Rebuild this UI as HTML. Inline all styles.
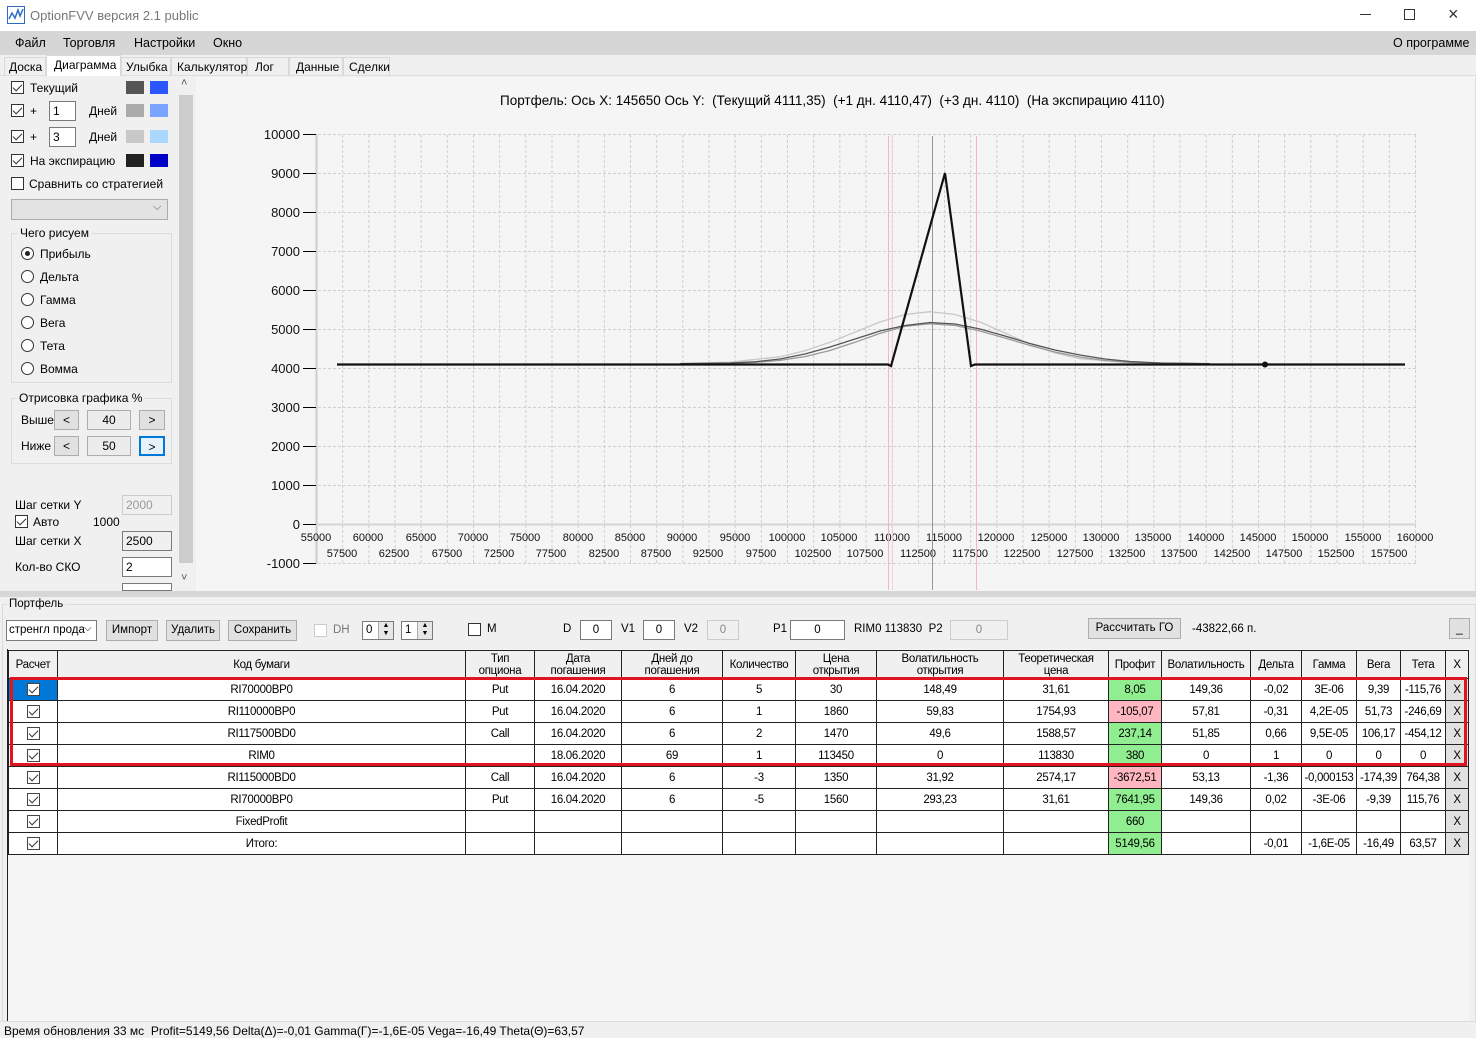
<!DOCTYPE html>
<html><head><meta charset="utf-8">
<style>
*{box-sizing:border-box;margin:0;padding:0}
body{width:1476px;height:1038px;overflow:hidden;background:#f0f0f0;font-family:"Liberation Sans",sans-serif;font-size:12px;color:#000;position:relative}
.a{position:absolute;white-space:nowrap}
.cb{position:absolute;width:13px;height:13px;border:1px solid #333;background:#fff}
.cb.c::after{content:"";position:absolute;left:3px;top:0px;width:4px;height:8px;border:solid #333;border-width:0 1.5px 1.5px 0;transform:rotate(45deg)}
.rb{position:absolute;width:13px;height:13px;border:1px solid #333;border-radius:50%;background:#fff}
.tb{position:absolute;background:#fff;border:1px solid #7a7a7a;padding:1px 3px;height:20px;line-height:16px}
.btn{position:absolute;background:#e1e1e1;border:1px solid #adadad;text-align:center;height:21px;line-height:19px}
.sw{position:absolute;width:18px;height:13px}
table{border-collapse:collapse;table-layout:fixed;position:absolute;left:8px;top:650px;width:1460px;font-size:11.5px;letter-spacing:-0.3px}
td{border:1px solid #222;height:22px;text-align:center;padding:0;background:#fff;overflow:hidden;white-space:nowrap}
tr.h td{height:28px;background:#f0f0f0;line-height:12px;font-size:11.5px;vertical-align:bottom;padding-bottom:1px}
tr.h td.s{vertical-align:middle;padding-bottom:0}
td.g{background:#90ee90}td.p{background:#ffb6c1}
.ck{display:inline-block;width:13px;height:13px;border:1px solid #444;position:relative;vertical-align:middle;background:#fff}
.ck::after{content:"";position:absolute;left:3px;top:0;width:4px;height:8px;border:solid #333;border-width:0 1.5px 1.5px 0;transform:rotate(45deg)}
</style></head><body>
<div class="a" style="left:0;top:0;width:1476px;height:31px;background:#fff"></div>
<svg class="a" style="left:7px;top:6px" width="18" height="18" viewBox="0 0 18 18"><rect x="0.5" y="0.5" width="17" height="17" fill="none" stroke="#2b6cc4"/><path d="M2 13 L5 7 L8 12 L11 4 L13 10 L16 3" fill="none" stroke="#2b6cc4" stroke-width="1.5"/></svg>
<div class="a" style="left:30px;top:8px;font-size:13px;color:#777">OptionFVV версия 2.1 public</div>
<div class="a" style="left:1360px;top:14px;width:11px;height:1px;background:#333"></div>
<div class="a" style="left:1404px;top:9px;width:11px;height:11px;border:1px solid #333"></div>
<div class="a" style="left:1448px;top:4px;font-size:18px;color:#333">×</div>
<div class="a" style="left:0;top:31px;width:1476px;height:24px;background:#d6d6d6"></div>
<div class="a" style="left:15px;top:36px;font-size:12.5px">Файл</div>
<div class="a" style="left:63px;top:36px;font-size:12.5px">Торговля</div>
<div class="a" style="left:134px;top:36px;font-size:12.5px">Настройки</div>
<div class="a" style="left:213px;top:36px;font-size:12.5px">Окно</div>
<div class="a" style="left:1393px;top:36px;font-size:12.5px">О программе</div>
<div class="a" style="left:0;top:55px;width:1476px;height:21px;background:#f0f0f0;border-bottom:1px solid #ddd"></div>
<div class="a" style="left:4px;top:57px;width:42px;height:19px;border:1px solid #d9d9d9;border-bottom:none;padding-left:4px;line-height:18px">Доска</div>
<div class="a" style="left:46px;top:55px;width:75px;height:22px;background:#fff;border:1px solid #d9d9d9;border-bottom:none;padding-left:7px;line-height:18px">Диаграмма</div>
<div class="a" style="left:121px;top:57px;width:50px;height:19px;border:1px solid #d9d9d9;border-bottom:none;padding-left:4px;line-height:18px">Улыбка</div>
<div class="a" style="left:171px;top:57px;width:76px;height:19px;border:1px solid #d9d9d9;border-bottom:none;padding-left:5px;line-height:18px">Калькулятор</div>
<div class="a" style="left:247px;top:57px;width:42px;height:19px;border:1px solid #d9d9d9;border-bottom:none;padding-left:7px;line-height:18px">Лог</div>
<div class="a" style="left:289px;top:57px;width:54px;height:19px;border:1px solid #d9d9d9;border-bottom:none;padding-left:6px;line-height:18px">Данные</div>
<div class="a" style="left:343px;top:57px;width:47px;height:19px;border:1px solid #d9d9d9;border-bottom:none;padding-left:5px;line-height:18px">Сделки</div>
<div class="a" style="left:2px;top:76px;width:192px;height:514px;background:#f0f0f0"></div>
<div class="cb c" style="left:11px;top:81px"></div><div class="a" style="left:30px;top:81px">Текущий</div>
<div class="sw" style="left:126px;top:81px;background:#555"></div><div class="sw" style="left:150px;top:81px;background:#2b55ff"></div>
<div class="cb c" style="left:11px;top:104px"></div><div class="a" style="left:30px;top:104px">+</div>
<div class="tb" style="left:49px;top:101px;width:27px">1</div><div class="a" style="left:89px;top:104px">Дней</div>
<div class="sw" style="left:126px;top:104px;background:#aaa"></div><div class="sw" style="left:150px;top:104px;background:#7aa4ff"></div>
<div class="cb c" style="left:11px;top:130px"></div><div class="a" style="left:30px;top:130px">+</div>
<div class="tb" style="left:49px;top:127px;width:27px">3</div><div class="a" style="left:89px;top:130px">Дней</div>
<div class="sw" style="left:126px;top:130px;background:#c8c8c8"></div><div class="sw" style="left:150px;top:130px;background:#aad8ff"></div>
<div class="cb c" style="left:11px;top:154px"></div><div class="a" style="left:30px;top:154px">На экспирацию</div>
<div class="sw" style="left:126px;top:154px;background:#222"></div><div class="sw" style="left:150px;top:154px;background:#0000c8"></div>
<div class="cb" style="left:11px;top:177px"></div><div class="a" style="left:29px;top:177px">Сравнить со стратегией</div>
<div class="a" style="left:11px;top:199px;width:157px;height:21px;background:#e3e3e3;border:1px solid #acacac"></div>
<div class="a" style="left:153px;top:201px;color:#555;font-size:11px">⌵</div>
<div class="a" style="left:11px;top:233px;width:161px;height:150px;border:1px solid #dcdcdc"></div>
<div class="a" style="left:17px;top:226px;background:#f0f0f0;padding:0 3px">Чего рисуем</div>
<div class="rb" style="left:21px;top:247px"></div><div class="a" style="left:25px;top:251px;width:5px;height:5px;border-radius:50%;background:#222"></div><div class="a" style="left:40px;top:247px">Прибыль</div>
<div class="rb" style="left:21px;top:270px"></div><div class="a" style="left:40px;top:270px">Дельта</div>
<div class="rb" style="left:21px;top:293px"></div><div class="a" style="left:40px;top:293px">Гамма</div>
<div class="rb" style="left:21px;top:316px"></div><div class="a" style="left:40px;top:316px">Вега</div>
<div class="rb" style="left:21px;top:339px"></div><div class="a" style="left:40px;top:339px">Тета</div>
<div class="rb" style="left:21px;top:362px"></div><div class="a" style="left:40px;top:362px">Вомма</div>
<div class="a" style="left:11px;top:398px;width:161px;height:66px;border:1px solid #dcdcdc"></div>
<div class="a" style="left:17px;top:391px;background:#f0f0f0;padding:0 2px">Отрисовка графика %</div>
<div class="a" style="left:21px;top:413px">Выше</div>
<div class="btn" style="left:54px;top:410px;width:25px;height:20px;line-height:18px">&lt;</div>
<div class="btn" style="left:87px;top:410px;width:44px;height:20px;line-height:18px;background:#ececec">40</div>
<div class="btn" style="left:139px;top:410px;width:26px;height:20px;line-height:18px">&gt;</div>
<div class="a" style="left:21px;top:439px">Ниже</div>
<div class="btn" style="left:54px;top:436px;width:25px;height:20px;line-height:18px">&lt;</div>
<div class="btn" style="left:87px;top:436px;width:44px;height:20px;line-height:18px;background:#ececec">50</div>
<div class="btn" style="left:139px;top:436px;width:26px;height:20px;line-height:18px;border:2px solid #0078d7;background:#e5f1fb">&gt;</div>
<div class="a" style="left:15px;top:498px">Шаг сетки Y</div>
<div class="tb" style="left:122px;top:495px;width:50px;background:#f0f0f0;border-color:#ccc;color:#999">2000</div>
<div class="cb c" style="left:15px;top:515px"></div><div class="a" style="left:33px;top:515px">Авто</div><div class="a" style="left:93px;top:515px">1000</div>
<div class="a" style="left:15px;top:534px">Шаг сетки X</div>
<div class="tb" style="left:122px;top:531px;width:50px;background:#f0f0f0">2500</div>
<div class="a" style="left:15px;top:560px">Кол-во СКО</div>
<div class="tb" style="left:122px;top:557px;width:50px">2</div>
<div class="tb" style="left:122px;top:583px;width:50px;height:8px"></div>
<div class="a" style="left:178px;top:78px;width:16px;height:512px;background:#f0f0f0"></div>
<div class="a" style="left:179px;top:95px;width:14px;height:468px;background:#cdcdcd"></div>
<div class="a" style="left:181px;top:77px;font-size:11px;color:#555">˄</div>
<div class="a" style="left:181px;top:572px;font-size:11px;color:#555">˅</div>
<div class="a" style="left:196px;top:77px;width:1280px;height:514px;background:#f5f5f5;border-right:1px solid #ddd"></div>
<div class="a" style="left:500px;top:93px;font-size:13.5px">Портфель: Ось X: 145650 Ось Y:&nbsp; (Текущий 4111,35)&nbsp; (+1 дн. 4110,47)&nbsp; (+3 дн. 4110)&nbsp; (На экспирацию 4110)</div>
<svg class="a" style="left:0;top:0" width="1476" height="600">
<defs><pattern id="gv" x="316" y="0" width="26.167" height="10" patternUnits="userSpaceOnUse"><line x1="0.5" y1="0" x2="0.5" y2="10" stroke="#cfcfcf" stroke-dasharray="3,2"/></pattern></defs>
<rect x="318" y="134" width="1098" height="430" fill="url(#gv)"/>
<g stroke="#cfcfcf" stroke-dasharray="3,2">
<line x1="318" y1="134.5" x2="1416" y2="134.5"/><line x1="318" y1="173.5" x2="1416" y2="173.5"/><line x1="318" y1="212.5" x2="1416" y2="212.5"/><line x1="318" y1="251.5" x2="1416" y2="251.5"/><line x1="318" y1="290.5" x2="1416" y2="290.5"/><line x1="318" y1="329.5" x2="1416" y2="329.5"/><line x1="318" y1="368.5" x2="1416" y2="368.5"/><line x1="318" y1="407.5" x2="1416" y2="407.5"/><line x1="318" y1="446.5" x2="1416" y2="446.5"/><line x1="318" y1="485.5" x2="1416" y2="485.5"/><line x1="318" y1="563.5" x2="1416" y2="563.5"/>
</g>
<line x1="316.5" y1="134" x2="316.5" y2="564" stroke="#ccc" stroke-width="2"/>
<line x1="316" y1="524.5" x2="1416" y2="524.5" stroke="#d4d4d4" stroke-width="2"/>
<g stroke="#000"><line x1="303" y1="134.5" x2="316" y2="134.5"/><line x1="303" y1="173.5" x2="316" y2="173.5"/><line x1="303" y1="212.5" x2="316" y2="212.5"/><line x1="303" y1="251.5" x2="316" y2="251.5"/><line x1="303" y1="290.5" x2="316" y2="290.5"/><line x1="303" y1="329.5" x2="316" y2="329.5"/><line x1="303" y1="368.5" x2="316" y2="368.5"/><line x1="303" y1="407.5" x2="316" y2="407.5"/><line x1="303" y1="446.5" x2="316" y2="446.5"/><line x1="303" y1="485.5" x2="316" y2="485.5"/><line x1="303" y1="524.5" x2="316" y2="524.5"/><line x1="303" y1="563.5" x2="316" y2="563.5"/></g>
<g font-family="Liberation Sans" font-size="13" text-anchor="end" fill="#111">
<text x="300" y="139">10000</text><text x="300" y="178">9000</text><text x="300" y="217">8000</text><text x="300" y="256">7000</text><text x="300" y="295">6000</text><text x="300" y="334">5000</text><text x="300" y="373">4000</text><text x="300" y="412">3000</text><text x="300" y="451">2000</text><text x="300" y="490">1000</text><text x="300" y="529">0</text><text x="300" y="568">-1000</text>
</g>
<g font-family="Liberation Sans" font-size="11" text-anchor="middle" fill="#111">
<text x="316" y="541">55000</text><text x="368" y="541">60000</text><text x="421" y="541">65000</text><text x="473" y="541">70000</text><text x="525" y="541">75000</text><text x="578" y="541">80000</text><text x="630" y="541">85000</text><text x="682" y="541">90000</text><text x="735" y="541">95000</text><text x="787" y="541">100000</text><text x="839" y="541">105000</text><text x="892" y="541">110000</text><text x="944" y="541">115000</text><text x="996" y="541">120000</text><text x="1049" y="541">125000</text><text x="1101" y="541">130000</text><text x="1153" y="541">135000</text><text x="1206" y="541">140000</text><text x="1258" y="541">145000</text><text x="1310" y="541">150000</text><text x="1363" y="541">155000</text><text x="1415" y="541">160000</text>
<text x="342" y="557">57500</text><text x="394" y="557">62500</text><text x="447" y="557">67500</text><text x="499" y="557">72500</text><text x="551" y="557">77500</text><text x="604" y="557">82500</text><text x="656" y="557">87500</text><text x="708" y="557">92500</text><text x="761" y="557">97500</text><text x="813" y="557">102500</text><text x="865" y="557">107500</text><text x="918" y="557">112500</text><text x="970" y="557">117500</text><text x="1022" y="557">122500</text><text x="1075" y="557">127500</text><text x="1127" y="557">132500</text><text x="1179" y="557">137500</text><text x="1232" y="557">142500</text><text x="1284" y="557">147500</text><text x="1336" y="557">152500</text><text x="1389" y="557">157500</text>
</g>
<line x1="888.5" y1="136" x2="888.5" y2="590" stroke="#f2b8c0"/>
<line x1="892.5" y1="136" x2="892.5" y2="590" stroke="#f6d0d6"/>
<line x1="976.5" y1="136" x2="976.5" y2="590" stroke="#f2b8c0"/>
<line x1="932.5" y1="136" x2="932.5" y2="590" stroke="#8899aa"/>
<polyline fill="none" stroke="#c8c8c8" stroke-width="1.3" points="680,363.7 730,362.2 780,356.7 805,350.8 830,342.3 855,332.1 880,322 905,314.5 930,311.7 955,314.5 980,322 1005,333 1030,344 1055,353 1080,358.7 1130,362.6 1200,363.7"/>
<polyline fill="none" stroke="#999" stroke-width="1.3" points="680,363.7 730,363.2 755,362.4 780,360.4 805,356.6 830,350.5 855,342.3 880,333.4 905,326.4 930,323.7 955,325.5 980,331 1005,338 1030,345.5 1055,352 1080,357 1105,360.5 1130,362.5 1200,363.7"/>
<polyline fill="none" stroke="#555" stroke-width="1.3" points="680,363.7 730,363 755,361.8 780,359 805,354 830,347 855,339 880,331 905,325.5 930,322.5 955,324 980,329 1005,336 1030,343.5 1055,350 1080,355 1105,359 1130,361.5 1160,363 1210,363.7"/>
<polyline fill="none" stroke="#111" stroke-width="2.2" points="337,364.5 888,364.5 891,366 945,173 971,366 975,364.5 1405,364.5"/>
<circle cx="1265" cy="364.5" r="3" fill="#111"/>
</svg>
<div class="a" style="left:0;top:591px;width:1476px;height:6px;background:#d6d6d6"></div>
<div class="a" style="left:2px;top:604px;width:1474px;height:418px;border:1px solid #dcdcdc;border-bottom:none"></div>
<div class="a" style="left:7px;top:598px;background:#f0f0f0;padding:0 2px;font-size:11.5px">Портфель</div>
<div class="a" style="left:6px;top:620px;width:91px;height:21px;background:#fff;border:1px solid #7a7a7a;padding-left:2px;line-height:19px;font-size:11.5px;overflow:hidden">стренгл прода</div>
<div class="a" style="left:84px;top:623px;font-size:10px">⌵</div>
<div class="btn" style="left:106px;top:620px;width:52px;font-size:11.5px">Импорт</div>
<div class="btn" style="left:166px;top:620px;width:54px;font-size:11.5px">Удалить</div>
<div class="btn" style="left:228px;top:620px;width:69px;font-size:11.5px">Сохранить</div>
<div class="a" style="left:314px;top:624px;width:13px;height:13px;border:1px solid #ccc;background:#fff"></div>
<div class="a" style="left:333px;top:624px;color:#777;font-size:11.5px">DH</div>
<div class="tb" style="left:362px;top:621px;width:32px;height:19px;line-height:15px;font-size:11.5px">0</div>
<div class="tb" style="left:401px;top:621px;width:32px;height:19px;line-height:15px;font-size:11.5px">1</div>
<div class="a" style="left:378px;top:622px;width:15px;height:17px;background:#e6e6e6;border-left:1px solid #aaa;font-size:7px;text-align:center;line-height:8px">▲<br>▼</div>
<div class="a" style="left:417px;top:622px;width:15px;height:17px;background:#e6e6e6;border-left:1px solid #aaa;font-size:7px;text-align:center;line-height:8px">▲<br>▼</div>
<div class="a" style="left:468px;top:623px;width:13px;height:13px;border:1px solid #333;background:#fff"></div>
<div class="a" style="left:487px;top:623px;font-size:11.5px">M</div>
<div class="a" style="left:563px;top:623px;font-size:11.5px">D</div>
<div class="tb" style="left:580px;top:620px;width:32px;text-align:center;font-size:11.5px">0</div>
<div class="a" style="left:621px;top:623px;font-size:11.5px">V1</div>
<div class="tb" style="left:643px;top:620px;width:32px;text-align:center;font-size:11.5px">0</div>
<div class="a" style="left:684px;top:623px;font-size:11.5px">V2</div>
<div class="tb" style="left:707px;top:620px;width:32px;text-align:center;font-size:11.5px;background:#f0f0f0;border-color:#ccc;color:#888">0</div>
<div class="a" style="left:773px;top:623px;font-size:11.5px">P1</div>
<div class="tb" style="left:790px;top:620px;width:55px;text-align:center;font-size:11.5px">0</div>
<div class="a" style="left:854px;top:623px;font-size:11.5px">RIM0 113830&nbsp; P2</div>
<div class="tb" style="left:950px;top:620px;width:58px;text-align:center;font-size:11.5px;background:#f0f0f0;border-color:#ccc;color:#888">0</div>
<div class="btn" style="left:1088px;top:618px;width:93px;font-size:11.5px">Рассчитать ГО</div>
<div class="a" style="left:1192px;top:623px;font-size:11.5px">-43822,66 п.</div>
<div class="btn" style="left:1449px;top:618px;width:21px">_</div>
<div class="a" style="left:7px;top:649px;width:1462px;height:372px;border-left:1px solid #222;background:#f5f5f5"></div>
<table>
<colgroup><col style="width:49px"><col style="width:408px"><col style="width:69px"><col style="width:87px"><col style="width:101px"><col style="width:73px"><col style="width:81px"><col style="width:127px"><col style="width:105px"><col style="width:53px"><col style="width:89px"><col style="width:51px"><col style="width:55px"><col style="width:44px"><col style="width:45px"><col style="width:23px"></colgroup>
<tr class="h"><td class="s">Расчет</td><td class="s">Код бумаги</td><td>Тип<br>опциона</td><td>Дата<br>погашения</td><td>Дней до<br>погашения</td><td class="s">Количество</td><td>Цена<br>открытия</td><td>Волатильность<br>открытия</td><td>Теоретическая<br>цена</td><td class="s">Профит</td><td class="s">Волатильность</td><td class="s">Дельта</td><td class="s">Гамма</td><td class="s">Вега</td><td class="s">Тета</td><td class="s">X</td></tr>
<tr><td style="background:#0078d7"><span class="ck"></span></td><td>RI70000BP0</td><td>Put</td><td>16.04.2020</td><td>6</td><td>5</td><td>30</td><td>148,49</td><td>31,61</td><td class="g">8,05</td><td>149,36</td><td>-0,02</td><td>3E-06</td><td>9,39</td><td>-115,76</td><td style="background:#e1e1e1">X</td></tr>
<tr><td><span class="ck"></span></td><td>RI110000BP0</td><td>Put</td><td>16.04.2020</td><td>6</td><td>1</td><td>1860</td><td>59,83</td><td>1754,93</td><td class="p">-105,07</td><td>57,81</td><td>-0,31</td><td>4,2E-05</td><td>51,73</td><td>-246,69</td><td style="background:#e1e1e1">X</td></tr>
<tr><td><span class="ck"></span></td><td>RI117500BD0</td><td>Call</td><td>16.04.2020</td><td>6</td><td>2</td><td>1470</td><td>49,6</td><td>1588,57</td><td class="g">237,14</td><td>51,85</td><td>0,66</td><td>9,5E-05</td><td>106,17</td><td>-454,12</td><td style="background:#e1e1e1">X</td></tr>
<tr><td><span class="ck"></span></td><td>RIM0</td><td></td><td>18.06.2020</td><td>69</td><td>1</td><td>113450</td><td>0</td><td>113830</td><td class="g">380</td><td>0</td><td>1</td><td>0</td><td>0</td><td>0</td><td style="background:#e1e1e1">X</td></tr>
<tr><td><span class="ck"></span></td><td>RI115000BD0</td><td>Call</td><td>16.04.2020</td><td>6</td><td>-3</td><td>1350</td><td>31,92</td><td>2574,17</td><td class="p">-3672,51</td><td>53,13</td><td>-1,36</td><td>-0,000153</td><td>-174,39</td><td>764,38</td><td style="background:#e1e1e1">X</td></tr>
<tr><td><span class="ck"></span></td><td>RI70000BP0</td><td>Put</td><td>16.04.2020</td><td>6</td><td>-5</td><td>1560</td><td>293,23</td><td>31,61</td><td class="g">7641,95</td><td>149,36</td><td>0,02</td><td>-3E-06</td><td>-9,39</td><td>115,76</td><td style="background:#e1e1e1">X</td></tr>
<tr><td><span class="ck"></span></td><td>FixedProfit</td><td></td><td></td><td></td><td></td><td></td><td></td><td></td><td class="g">660</td><td></td><td></td><td></td><td></td><td></td><td style="background:#e1e1e1">X</td></tr>
<tr><td><span class="ck"></span></td><td>Итого:</td><td></td><td></td><td></td><td></td><td></td><td></td><td></td><td class="g">5149,56</td><td></td><td>-0,01</td><td>-1,6E-05</td><td>-16,49</td><td>63,57</td><td style="background:#e1e1e1">X</td></tr>
</table>
<div class="a" style="left:10px;top:677px;width:1457px;height:89px;border:3px solid #e0141e"></div>
<div class="a" style="left:0;top:1021px;width:1476px;height:17px;background:#f0f0f0;border-top:1px solid #ddd"></div>
<div class="a" style="left:4px;top:1024px;font-size:12px">Время обновления 33 мс&nbsp; Profit=5149,56 Delta(Δ)=-0,01 Gamma(Γ)=-1,6E-05 Vega=-16,49 Theta(Θ)=63,57</div>
</body></html>
